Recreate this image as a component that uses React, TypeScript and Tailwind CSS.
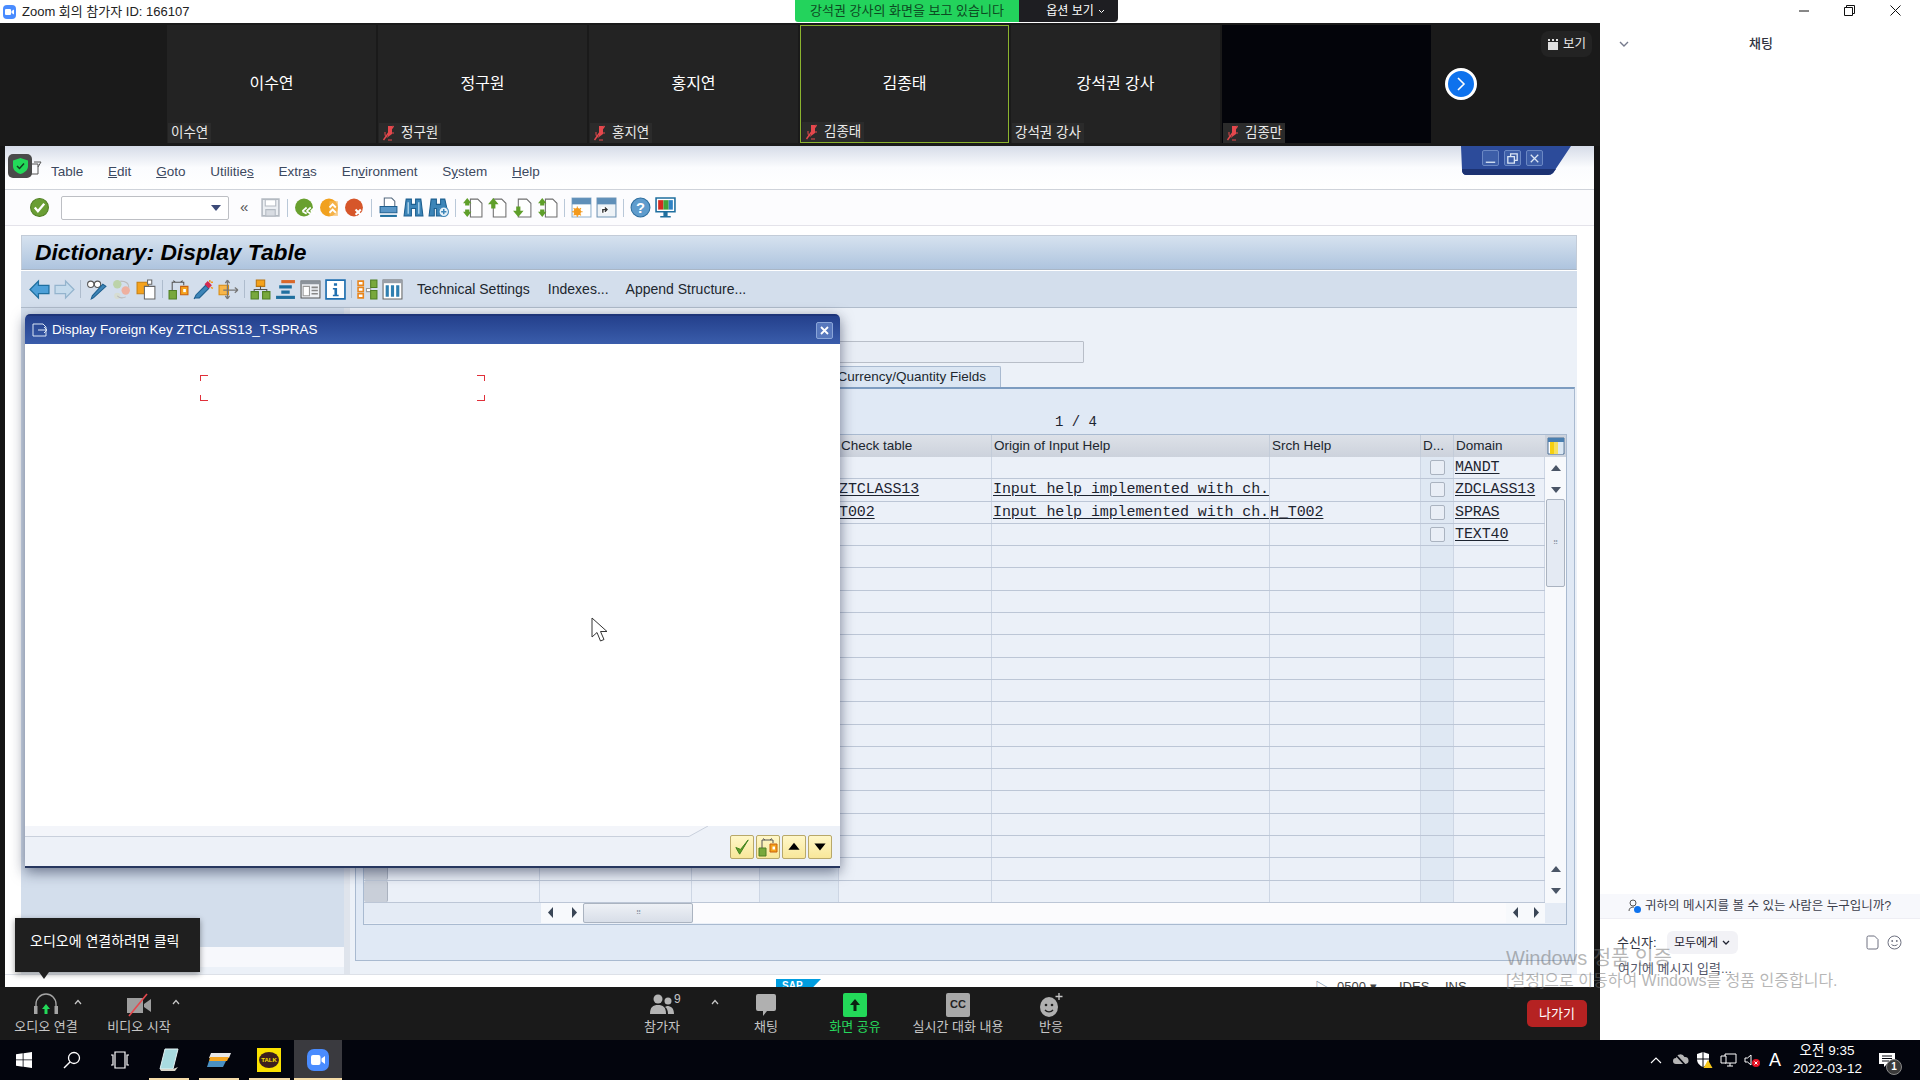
import React from 'react';

// ---- SAP GUI toolbar icons, all on a 20x20 box ----
const sapIcons: Record<string, React.ReactNode> = {
  ok: (
    <>
      <circle cx="10" cy="10" r="8.5" fill="#6a9e35" stroke="#4f7f22" />
      <path d="M5.5 10l3 3.5 6-7" fill="none" stroke="#fff" strokeWidth="2.2" />
    </>
  ),
  save: (
    <>
      <path d="M2 2h16v16H2z" fill="#eceff3" stroke="#b4bac2" strokeWidth="1.5" />
      <path d="M5 2.500h10v6H5z" fill="#fff" stroke="#b4bac2" />
      <path d="M5.500 12h9v6h-9z" fill="#d8dce2" stroke="#b4bac2" />
    </>
  ),
  back: (
    <>
      <circle cx="9.5" cy="10" r="8.5" fill="#69a02f" />
      <path d="M12 10l-4 3.5M12 16l-4-2.5M16 10l-4 3.5M16 16l-4-2.5M20 10l-4 3.5M20 16l-4-2.5" stroke="#fff" strokeWidth="1.6" fill="none" />
    </>
  ),
  exit: (
    <>
      <circle cx="9.5" cy="10" r="8.5" fill="#f1a11e" />
      <path d="M10 4h8v14h-8z" fill="#f7b95a" opacity="0.7" />
      <path d="M10 10l3-3 3 3M10 15l3-3 3 3" stroke="#fff" strokeWidth="1.7" fill="none" />
    </>
  ),
  cancel: (
    <>
      <circle cx="9.5" cy="10" r="8.5" fill="#d6562a" />
      <path d="M11 12l5 5M16 12l-5 5" stroke="#fff" strokeWidth="2" />
    </>
  ),
  print: (
    <>
      <path d="M6 1h7l3 3v5H6z" fill="#fff" stroke="#55697f" />
      <path d="M2 9h16v6H2z" fill="#5a97c7" stroke="#1f5f8f" />
      <path d="M2 17h16v2H2z" fill="#1f6f9f" />
    </>
  ),
  find: (
    <>
      <path d="M3 2h5v5h4V2h5l2 16h-7V11H8v7H1z" fill="#3d85b8" stroke="#1d5f8f" />
      <path d="M5 5v11M15 5v11" stroke="#a8d0ea" strokeWidth="1.4" />
    </>
  ),
  findNext: (
    <>
      <path d="M3 2h5v5h4V2h4l2 9-5 1v6H8v-7H6v7H1z" fill="#3d85b8" stroke="#1d5f8f" />
      <circle cx="15" cy="14" r="4.5" fill="#e8f2f9" stroke="#3d85b8" />
      <path d="M15 11.500v5M12.500 14h5" stroke="#3d85b8" strokeWidth="1.4" />
    </>
  ),
  pageFirst: (
    <>
      <path d="M8 2h7l4 4v13H8z" fill="#fff" stroke="#6f6f6f" />
      <path d="M1 6l4-5 4 5H7v2H3V6zM1 14l4 5 4-5H7v-2H3v2z" fill="#5f9f2a" />
    </>
  ),
  pagePrev: (
    <>
      <path d="M6 2h8l4 4v13H6z" fill="#fff" stroke="#6f6f6f" />
      <path d="M1 7l5-6 5 6H8v4H4V7z" fill="#5f9f2a" />
    </>
  ),
  pageNext: (
    <>
      <path d="M6 2h8l4 4v13H6z" fill="#fff" stroke="#6f6f6f" />
      <path d="M1 13l5 6 5-6H8V9H4v4z" fill="#5f9f2a" />
    </>
  ),
  winNew: (
    <>
      <path d="M1 1h18v18H1z" fill="#fff" stroke="#8fb0cc" />
      <path d="M1 1h18v6H1z" fill="#5f8fb8" />
      <circle cx="6" cy="14" r="3.5" fill="#f39a1d" />
      <path d="M6 9v10M1 14h10M2.500 10.500l7 7M9.500 10.500l-7 7" stroke="#f39a1d" />
    </>
  ),
  winLink: (
    <>
      <path d="M1 1h18v18H1z" fill="#eef3f7" stroke="#6f93b3" />
      <path d="M1 1h18v6H1z" fill="#5f8fb8" />
      <path d="M5 9.500h6v6H5z" fill="#fff" />
      <path d="M6.500 15v-3h4M8.500 10l2 2-2 2" stroke="#333" fill="none" strokeWidth="1.3" />
    </>
  ),
  help: (
    <>
      <circle cx="10" cy="10" r="9" fill="#5f9ccd" stroke="#2f6f9f" />
      <text x="10" y="15" textAnchor="middle" fontSize="14" fontWeight="700" fill="#fff" fontFamily="Liberation Sans">?</text>
    </>
  ),
  monitor: (
    <>
      <path d="M1 1h18v13H1z" fill="#fff" stroke="#1f6f9f" strokeWidth="1.5" />
      <path d="M3 3h5v9H3z" fill="#d42a20" />
      <path d="M8 3h5v9H8z" fill="#41a33a" />
      <path d="M13 3h4v9h-4z" fill="#2f82c4" />
      <path d="M8 14h4v4h3v1.500H5V18h3z" fill="#1f6f9f" />
    </>
  ),
  arrowL: <path d="M1 10l8-8v4h10v8H9v4z" fill="#4da0d8" stroke="#1f6f9f" strokeWidth="1.2" />,
  arrowR: <path d="M19 10l-8-8v4H1v8h10v4z" fill="#c5dbec" stroke="#94b4cd" strokeWidth="1.2" />,
  glasses: (
    <>
      <circle cx="4.500" cy="5" r="3" fill="#fff" stroke="#555" />
      <circle cx="11" cy="5" r="3" fill="#fff" stroke="#555" />
      <path d="M7 18l-2 1 1-3 10-11 3 2z" fill="#3d85b8" stroke="#1d5f8f" />
    </>
  ),
  circles: (
    <>
      <circle cx="6" cy="5" r="4" fill="#bcd3a9" />
      <circle cx="14" cy="11" r="4" fill="#eeb0a0" />
      <circle cx="6" cy="16" r="3" fill="#d7ddd2" />
      <path d="M9 2c6 0 8 2 8 6M14 17c-3 1.500-6 1-8-1" stroke="#bbb" fill="none" />
    </>
  ),
  docOrange: (
    <>
      <path d="M1 3h11v11H1z" fill="#f5a21b" stroke="#c87f10" />
      <path d="M8 7h10v12H8z" fill="#fff" stroke="#666" />
      <path d="M11 1h4v4h-4z" fill="#fff" stroke="#666" />
    </>
  ),
  relate: (
    <>
      <path d="M1 11h7v8H1z" fill="#78a83c" stroke="#4f7f22" />
      <path d="M12 7h7v8h-7z" fill="#f5a21b" stroke="#c8600f" />
      <path d="M14.500 9.500h2.500v3h-2.500z" fill="#fff" />
      <path d="M4 11V3h11v3M7 3l-2-1.500M12 3l2-1.500" stroke="#555" fill="none" />
    </>
  ),
  wand: (
    <>
      <path d="M2 18l-1 1 2-4 9-9 3 3-9 9z" fill="#3d85b8" stroke="#1d5f8f" />
      <path d="M11 5l3-3 4 4-3 3z" fill="#d42a50" />
      <path d="M16 1v2M19 3h-2M19 9l-2-1" stroke="#f39a1d" strokeWidth="1.4" />
    </>
  ),
  moveOut: (
    <>
      <path d="M1 6h9v9H1z" fill="#f8b64a" stroke="#d88a10" />
      <path d="M9 1v18M9 1L7 4M9 1l2 3M9 19l-2-3M9 19l2-3M5 10.500h14M19 10.500L16 8M19 10.500L16 13" stroke="#777" fill="none" strokeWidth="1.2" />
    </>
  ),
  tree: (
    <>
      <path d="M6 1h8v6H6z" fill="#f5a21b" stroke="#b87510" />
      <path d="M10 7v3M4 12v-2h12v2" stroke="#555" fill="none" />
      <path d="M1 12h7v7H1zM12 12h7v7h-7z" fill="#78a83c" stroke="#4f7f22" />
    </>
  ),
  stack: (
    <>
      <path d="M6 1h13v3H6z" fill="#d9682a" />
      <path d="M4 6h12v3H4zM6 11h8v3H6z" fill="#1f6f9f" />
      <path d="M1 16h18v3H1z" fill="#1f6f9f" />
    </>
  ),
  list: (
    <>
      <path d="M1 2h18v16H1z" fill="#eef1f5" stroke="#555" />
      <path d="M1 2h18v3H1z" fill="#8c939b" />
      <path d="M3 7h6v9H3z" fill="#fff" stroke="#999" />
      <path d="M11 8h6M11 11h6M11 14h6" stroke="#888" strokeWidth="1.5" />
    </>
  ),
  info: (
    <>
      <path d="M1 1h18v18H1z" fill="#fff" stroke="#1f6fb0" strokeWidth="1.6" />
      <path d="M8.500 4h3v2.500h-3zM7.500 8.500h4V15H13v1.500H7.500V15H9v-5H7.500z" fill="#1f6fb0" />
    </>
  ),
  blocks: (
    <>
      <path d="M1 2h5v4H1zM1 8h5v4H1zM1 14h5v4H1z" fill="#fff" stroke="#e8851c" strokeWidth="1.5" />
      <path d="M9 9h4v3H9z" fill="#fff" stroke="#999" />
      <path d="M13 1h6v7h-6zM13 11h6v8h-6z" fill="#78a83c" stroke="#4f7f22" />
    </>
  ),
  columns: (
    <>
      <path d="M1 1h18v18H1z" fill="#fff" stroke="#666" />
      <path d="M1 1h18v3H1z" fill="#9aa0a8" />
      <path d="M3.500 6h3v11h-3zM8.500 6h3v11h-3zM13.500 6h3v11h-3z" fill="#2f7fb0" />
    </>
  ),
  dlgAccept: <path d="M3 10l4 7 9-15-8 10z" fill="#5f9f2a" stroke="#3d7f1a" />,
  dlgUp: <path d="M10 4l8 10H2z" fill="#000" />,
  dlgDown: <path d="M2 5h16l-8 10z" fill="#000" />,
};

const SapIcon = ({ name, size = 21 }: { name: string; size?: number }) => (
  <svg width={size} height={size} viewBox="0 0 20 20">
    {sapIcons[name]}
  </svg>
);

const ToolBtn = ({ name }: { name: string }) => (
  <div className="w-[25px] flex items-center justify-center">
    <SapIcon name={name} />
  </div>
);

const ToolSep = ({ className = 'mx-[4px] bg-[#b9c8d8]' }: { className?: string }) => <div className={`w-px h-[18px] ${className}`} />;

// ---- Zoom participant strip ----
const MicOff = () => (
  <svg width="13" height="16" viewBox="0 0 13 16" className="shrink-0">
    <path d="M6 1h4v8l-4 3z" fill="#e5484d" />
    <path d="M3 7v2c0 2 1 3 3 3M11 7v2M6 15h4" stroke="#e5484d" fill="none" />
    <path d="M11.500 1L1.500 15" stroke="#e5484d" strokeWidth="1.4" />
  </svg>
);

const Tile = ({ name, muted, active, dark }: { name: string; muted?: boolean; active?: boolean; dark?: boolean }) => (
  <div
    className={`relative w-[209px] h-[118px] flex items-center justify-center ${dark ? 'bg-[#03040a]' : 'bg-[#232323]'} ${
      active ? 'border border-[#8bb32e]' : ''
    }`}
  >
    {!dark && <span className="text-white text-[16px] -mt-[1px]">{name}</span>}
    <div className="absolute left-[1px] bottom-0 h-[20px] px-[3px] flex items-center gap-[6px] bg-[#2b2b2b] text-[#eaeaea] text-[13.5px]">
      {muted && <MicOff />}
      {name}
    </div>
  </div>
);

// ---- Zoom bottom bar ----
const Caret = ({ left }: { left: string }) => (
  <svg width="8" height="6" viewBox="0 0 8 6" className={`absolute top-[12px] ${left}`}>
    <path d="M1 5l3-3.500L7 5" stroke="#c8c8c8" strokeWidth="1.2" fill="none" />
  </svg>
);

const BarItem = ({ label, className, green, children }: { label: string; className: string; green?: boolean; children: React.ReactNode }) => (
  <div className={`relative flex flex-col items-center pt-[5px] ${className}`}>
    <div className="h-[25px] flex items-center justify-center">{children}</div>
    <span className={`text-[13px] whitespace-nowrap ${green ? 'text-[#26d75c]' : 'text-[#c6c6c6]'}`}>{label}</span>
  </div>
);

const ZoomBar = () => (
  <div className="h-[53px] shrink-0 bg-[#1a1a1a] flex">
    <BarItem label="오디오 연결" className="ml-[14px] w-[64px]">
      <svg width="26" height="24" viewBox="0 0 26 24">
        <path d="M3 17V11a10 10 0 0 1 20 0v6" stroke="#a4a4a4" strokeWidth="1.4" fill="none" />
        <path d="M1 13h3.500v8H1zM21.500 13H25v8h-3.500z" fill="#a4a4a4" />
        <path d="M13 11l4 5h-2.500v5h-3v-5H9z" fill="#23d959" />
      </svg>
      <Caret left="left-[60px]" />
    </BarItem>
    <BarItem label="비디오 시작" className="ml-[29px] w-[64px]">
      <svg width="26" height="24" viewBox="0 0 26 24">
        <path d="M1 5h16v15H1z" fill="#9e9e9e" />
        <path d="M18 11l7-5v13l-7-5z" fill="#9e9e9e" />
        <path d="M21 1L3 23" stroke="#e5484d" strokeWidth="1.6" />
      </svg>
      <Caret left="left-[65px]" />
    </BarItem>
    <BarItem label="참가자" className="ml-[466px] w-[50px]">
      <svg width="26" height="24" viewBox="0 0 26 24">
        <circle cx="9" cy="6" r="4.500" fill="#b4b4b4" />
        <circle cx="19" cy="8" r="3.500" fill="#b4b4b4" />
        <path d="M1 21c0-7 3-9 8-9s8 2 8 9z" fill="#b4b4b4" />
        <path d="M18 13c4 0 7 2 7 8h-6c0-3-1-6-3-7z" fill="#b4b4b4" />
      </svg>
      <span className="absolute left-[37px] top-[3px] text-[12px] text-[#c6c6c6]">9</span>
      <Caret left="left-[74px]" />
    </BarItem>
    <BarItem label="채팅" className="ml-[54px] w-[50px]">
      <svg width="22" height="24" viewBox="0 0 22 24">
        <path d="M3 1h16a2 2 0 0 1 2 2v13a2 2 0 0 1-2 2h-7l-4 5v-5H3a2 2 0 0 1-2-2V3a2 2 0 0 1 2-2z" fill="#b0b0b0" />
      </svg>
    </BarItem>
    <BarItem label="화면 공유" green className="ml-[29px] w-[70px]">
      <svg width="24" height="24" viewBox="0 0 24 24">
        <rect x="0" y="0" width="24" height="24" rx="2" fill="#23d959" />
        <path d="M12 6l5 6h-3.500v6h-3v-6H7z" fill="#0b2212" />
      </svg>
    </BarItem>
    <BarItem label="실시간 대화 내용" className="ml-[18px] w-[100px]">
      <div className="w-[24px] h-[24px] rounded-[2px] bg-[#a8a8a8] flex items-center justify-center text-[11px] font-bold text-[#222]">CC</div>
    </BarItem>
    <BarItem label="반응" className="ml-[18px] w-[50px]">
      <svg width="26" height="26" viewBox="0 0 26 26">
        <ellipse cx="11" cy="15" rx="9" ry="10" fill="#b0b0b0" />
        <circle cx="8" cy="13" r="1.300" fill="#222" />
        <circle cx="14" cy="13" r="1.300" fill="#222" />
        <path d="M7 18c2 2.500 6 2.500 8 0" stroke="#222" strokeWidth="1.3" fill="none" />
        <path d="M21 1v7M17.500 4.500h7" stroke="#c8c8c8" strokeWidth="1.3" />
      </svg>
    </BarItem>
    <button className="ml-[451px] mt-[13px] w-[60px] h-[27px] rounded-[5px] bg-[#b52222] text-white text-[13px]">나가기</button>
  </div>
);

// ---- Dictionary table ----
const colTemplate = 'grid grid-cols-[24px_152px_152px_68px_79px_153px_278px_151px_33px_91px]';
const dataRows: { check?: string; origin?: string; help?: string; domain?: string; box?: boolean }[] = [
  { domain: 'MANDT', box: true },
  { check: 'ZTCLASS13', origin: 'Input help implemented with ch.', domain: 'ZDCLASS13', box: true },
  { check: 'T002', origin: 'Input help implemented with ch.', help: 'H_T002', domain: 'SPRAS', box: true },
  { domain: 'TEXT40', box: true },
  ...Array.from({ length: 16 }, () => ({})),
];

const MonoCell = ({ text, className = '' }: { text?: string; className?: string }) => (
  <div className={`border-r border-[#cdd6e4] overflow-hidden font-['Liberation_Mono',monospace] text-[15px] tracking-[-0.1px] leading-[22px] text-[#1d2430] whitespace-nowrap ${className}`}>
    {text && <span className="underline underline-offset-[2px]">{text}</span>}
  </div>
);

const HeadCell = ({ text, className = '' }: { text?: string; className?: string }) => (
  <div className={`border-r border-[#c3ccd9] pl-[2px] flex items-center text-[13.5px] text-[#20262e] whitespace-nowrap overflow-hidden ${className}`}>{text}</div>
);

const ScrollBtn = ({ up }: { up?: boolean }) => (
  <div className="h-[22px] flex items-center justify-center bg-[#f7f9fc]">
    <svg width="10" height="7" viewBox="0 0 10 7">
      <path d={up ? 'M5 0l5 6H0z' : 'M0 0h10L5 6z'} fill="#4a5566" />
    </svg>
  </div>
);

const ArrowBox = ({ right }: { right?: boolean }) => (
  <div className="w-[18px] h-full flex items-center justify-center bg-[#f7f9fc]">
    <svg width="7" height="11" viewBox="0 0 7 11">
      <path d={right ? 'M1 0l5 5.500L1 11z' : 'M6 0L1 5.500 6 11z'} fill="#3a4656" />
    </svg>
  </div>
);

const FieldsTable = () => (
  <div className="h-[491px] border border-[#a9bad0] bg-[#ebf0f8] flex flex-col">
    <div className="flex">
      <div className="w-[1181px]">
        <div className={`${colTemplate} h-[22px] bg-gradient-to-b from-[#dde1e8] to-[#ccd2dc]`}>
          <HeadCell />
          <HeadCell />
          <HeadCell />
          <HeadCell />
          <HeadCell />
          <HeadCell text="Check table" />
          <HeadCell text="Origin of Input Help" />
          <HeadCell text="Srch Help" />
          <HeadCell text="D..." />
          <HeadCell text="Domain" className="border-r-0" />
        </div>
        {dataRows.map((r, i) => (
          <div key={i} className={`${colTemplate} h-[22.3px] border-b border-[#bcc6d6]`}>
            <div className="bg-[#c9cfd9] border-r border-[#aab2bf] rounded-[2px]" />
            <MonoCell />
            <MonoCell />
            <MonoCell />
            <MonoCell className="bg-[#dfe8f3]" />
            <MonoCell text={r.check} />
            <MonoCell text={r.origin} className="pl-[1px]" />
            <MonoCell text={r.help} />
            <div className="bg-[#dfe8f3] border-r border-[#cdd6e4] flex items-center justify-center">
              {r.box && <div className="w-[15px] h-[15px] rounded-[2px] border border-[#aab3c0] bg-[#e9eef6]" />}
            </div>
            <MonoCell text={r.domain} className="pl-[1px]" />
          </div>
        ))}
      </div>
      <div className="w-[21px] flex flex-col">
        <div className="h-[22px] flex items-center justify-center bg-[#ccd2dc]">
          <svg width="18" height="18" viewBox="0 0 18 18">
            <path d="M1 1h16v16H1z" fill="#fff" stroke="#4a6f95" />
            <path d="M1 1h16v4H1z" fill="#4a7fb0" />
            <path d="M3 5h4v12H3z" fill="#f5d010" />
            <path d="M7 5h4v12H7z" fill="#f5e060" />
            <path d="M11 5h5v12h-5z" fill="#dbe8f4" />
          </svg>
        </div>
        <ScrollBtn up />
        <ScrollBtn />
        <div className="flex-1 bg-[#f7f9fc] px-[1px]">
          <div className="h-[88px] mt-[-2px] border border-[#aab3c0] rounded-[2px] bg-[#e4eaf3] flex items-center justify-center text-[7px] text-[#8a94a3]">⠿</div>
        </div>
        <ScrollBtn up />
        <ScrollBtn />
      </div>
    </div>
    <div className="h-[20px] flex items-stretch">
      <div className="w-[177px] bg-[#e4ebf5]" />
      <ArrowBox />
      <div className="w-[6px] bg-[#f7f9fc]" />
      <ArrowBox right />
      <div className="w-[110px] border border-[#aab3c0] rounded-[2px] bg-gradient-to-b from-[#eef1f6] to-[#d8dee8] flex items-center justify-center text-[7px] text-[#8a94a3]">⠿</div>
      <div className="flex-1 bg-[#fbfbfd]" />
      <ArrowBox />
      <div className="w-[3px] bg-[#f7f9fc]" />
      <ArrowBox right />
      <div className="w-[21px] bg-[#e4ebf5]" />
    </div>
  </div>
);

// ---- SAP body under the application toolbar ----
const SapBody = () => (
  <div className="flex-1 flex bg-[#ecf1f8] min-h-0">
    <div className="w-[324px] flex flex-col">
      <div className="flex-1 bg-[#d3deec]" />
      <div className="h-[20px] bg-[#f7f8fc]" />
      <div className="h-[7px]" />
    </div>
    <div className="w-[6px] bg-[#dfe4ec]" />
    <div className="flex-1 flex flex-col pl-[5px] pr-[2px]">
      <div className="h-[55px] flex items-end justify-end pr-[491px]">
        <div className="w-[400px] h-[22px] border border-[#b8bec8] rounded-[1px] bg-[#e8edf5]" />
      </div>
      <div className="h-[24px] pt-[3px] flex justify-end pr-[574px]">
        <div className="h-[21px] pl-[2px] pr-[14px] flex items-center border border-b-0 border-[#a9bad0] rounded-t-[2px] bg-[#dbe6f3] text-[13.5px] text-[#20262e]">
          Currency/Quantity Fields
        </div>
      </div>
      <div className="h-[574px] border border-[#a9bad0] border-t-2 border-t-[#7d9cc0] bg-[#e0e9f5] pl-[7px] pr-[7px]">
        <div className="h-[45px] pl-[692px] pt-[24px] font-['Liberation_Mono',monospace] text-[14px] leading-[18px] text-[#1d2430] whitespace-pre">1 / 4</div>
        <FieldsTable />
      </div>
    </div>
  </div>
);

// ---- Popup over the SAP window ----
const ForeignKeyDialog = () => (
  <div className="absolute left-[20px] top-[168px] w-[815px] h-[554px] flex flex-col rounded-t-[5px] overflow-hidden border-b-2 border-[#27375f] shadow-[0_4px_14px_rgba(20,30,60,0.55)] bg-white">
    <div className="h-[30px] shrink-0 flex items-center pl-[7px] pr-[7px] bg-gradient-to-b from-[#24408c] to-[#3a5dab] border-t-2 border-[#1d3478]">
      <svg width="16" height="14" viewBox="0 0 16 14">
        <path d="M1 1h10l3 3v9H1z" fill="none" stroke="#dbe6f5" />
        <path d="M6 7h9M12 4l3 3-3 3" stroke="#dbe6f5" fill="none" />
      </svg>
      <span className="ml-[4px] text-white text-[13.5px]">Display Foreign Key ZTCLASS13_T-SPRAS</span>
      <div className="ml-auto w-[17px] h-[17px] rounded-[2px] bg-[#5878bd] border border-[#8aa5d8] flex items-center justify-center">
        <svg width="9" height="9" viewBox="0 0 9 9">
          <path d="M1 1l7 7M8 1L1 8" stroke="#fff" strokeWidth="1.8" />
        </svg>
      </div>
    </div>
    <div className="flex-1 relative">
      {/* red selection corners of the empty control */}
      <div className="absolute left-[175px] top-[31px] w-[8px] h-[6px] border-l border-t border-[#e0303a]" />
      <div className="absolute left-[175px] top-[51px] w-[8px] h-[6px] border-l border-b border-[#e0303a]" />
      <div className="absolute left-[452px] top-[31px] w-[8px] h-[6px] border-r border-t border-[#e0303a]" />
      <div className="absolute left-[452px] top-[51px] w-[8px] h-[6px] border-r border-b border-[#e0303a]" />
      <svg width="18" height="26" viewBox="0 0 18 26" className="absolute left-[566px] top-[273px]">
        <path d="M1 1v19l5-4.500 3.500 8.500 3.500-1.500L9.500 14.500H16z" fill="#fff" stroke="#333" />
      </svg>
    </div>
    <div className="relative h-[40px] shrink-0 bg-[#edf1f8] flex justify-end items-start pr-[8px] pt-[9px] gap-[2px]">
      <svg className="absolute left-0 top-0" width="815" height="12" viewBox="0 0 815 12">
        <path d="M0 0h683L664 10.500H0z" fill="#f3f5fa" />
        <path d="M683 0L664 10.500H0" stroke="#c9d0dc" fill="none" />
      </svg>
      {['dlgAccept', 'relate', 'dlgUp', 'dlgDown'].map((n) => (
        <div key={n} className="relative w-[24px] h-[24px] rounded-[2px] border border-[#b8a86a] bg-gradient-to-b from-[#fff7c8] to-[#f8e79a] flex items-center justify-center">
          <SapIcon name={n} size={n === 'relate' ? 20 : n === 'dlgAccept' ? 19 : 14} />
        </div>
      ))}
    </div>
  </div>
);

// ---- SAP window as seen inside the shared screen ----
const SapWindow = () => (
  <div className="relative w-[1589px] ml-[5px] flex-1 min-h-0 flex flex-col overflow-hidden bg-white">
    <div className="h-[44px] shrink-0 flex items-center gap-[24.800px] pl-[46px] pt-[10px] border-b border-[#cfd3da] bg-gradient-to-b from-[#d6dce8] via-[#fbfcfe] to-white text-[13.5px] text-[#3c4960]">
      <span>Table</span>
      <span><u>E</u>dit</span>
      <span><u>G</u>oto</span>
      <span>Utilitie<u>s</u></span>
      <span>Extr<u>a</u>s</span>
      <span>En<u>v</u>ironment</span>
      <span>S<u>y</u>stem</span>
      <span><u>H</u>elp</span>
    </div>

    <div className="h-[36px] shrink-0 flex items-center pl-[22px] border-b border-[#e4e3ea] bg-[#fcfcfe]">
      <ToolBtn name="ok" />
      <div className="ml-[9px] w-[168px] h-[24px] border border-[#bdbfc4] rounded-[2px] bg-white flex items-center justify-end pr-[7px]">
        <svg width="10" height="6" viewBox="0 0 10 6">
          <path d="M0 0h10L5 6z" fill="#3c4a78" />
        </svg>
      </div>
      <span className="ml-[11px] text-[15px] text-[#555]">«</span>
      <div className="ml-[10px] flex items-center">
        <ToolBtn name="save" />
        <ToolSep />
        <ToolBtn name="back" />
        <ToolBtn name="exit" />
        <ToolBtn name="cancel" />
        <ToolSep />
        <ToolBtn name="print" />
        <ToolBtn name="find" />
        <ToolBtn name="findNext" />
        <ToolSep />
        <ToolBtn name="pageFirst" />
        <ToolBtn name="pagePrev" />
        <ToolBtn name="pageNext" />
        <ToolBtn name="pageFirst" />
        <ToolSep />
        <ToolBtn name="winNew" />
        <ToolBtn name="winLink" />
        <ToolSep />
        <ToolBtn name="help" />
        <ToolBtn name="monitor" />
      </div>
    </div>

    <div className="flex-1 min-h-0 flex flex-col ml-[16px] mr-[17px] mt-[9px]">
      <div className="h-[35px] shrink-0 flex items-center pl-[13px] border border-[#c3ccd8] border-b-[#a9b6c6] bg-gradient-to-b from-[#d6e2ef] to-[#aec4de] text-[22.800px] font-bold italic text-black">
        Dictionary: Display Table
      </div>
      <div className="h-[37px] shrink-0 flex items-center pl-[6px] mt-[1px] border-b border-[#b0bccb] bg-[#d3deec] text-[14px] text-[#20262e]">
        <ToolBtn name="arrowL" />
        <ToolBtn name="arrowR" />
        <ToolSep className="mx-[3px] bg-[#aebccd]" />
        <ToolBtn name="glasses" />
        <ToolBtn name="circles" />
        <ToolBtn name="docOrange" />
        <ToolSep className="mx-[3px] bg-[#aebccd]" />
        <ToolBtn name="relate" />
        <ToolBtn name="wand" />
        <ToolBtn name="moveOut" />
        <ToolSep className="mx-[3px] bg-[#aebccd]" />
        <ToolBtn name="tree" />
        <ToolBtn name="stack" />
        <ToolBtn name="list" />
        <ToolBtn name="info" />
        <ToolSep className="mx-[3px] bg-[#aebccd]" />
        <ToolBtn name="blocks" />
        <ToolBtn name="columns" />
        <span className="ml-[12px]">Technical Settings</span>
        <span className="ml-[18px]">Indexes...</span>
        <span className="ml-[17px]">Append Structure...</span>
      </div>
      <SapBody />
      <div className="h-[13px] shrink-0" />
    </div>

    {/* cut-off status line behind the meeting bar */}
    <div className="absolute left-0 right-0 bottom-0 h-[13px] overflow-hidden border-t border-[#dde1e8] bg-white">
      <div className="absolute left-[771px] top-[4px] w-[45px] h-[14px] bg-[#009de0] [clip-path:polygon(0_0,100%_0,70%_100%,0_100%)] text-white text-[10px] font-bold pl-[6px] leading-[14px]">SAP</div>
      <div className="absolute left-[1310px] top-[5px] flex items-start text-[13px] leading-[14px] text-[#444]">
        <span className="w-[22px] text-[#7a8a9f]">▷</span>
        <span className="w-[62px]">0500 ▾</span>
        <span className="w-[46px]">IDES</span>
        <span>INS</span>
      </div>
    </div>

    {/* window buttons in the corner */}
    <svg width="112" height="32" viewBox="0 0 112 32" className="absolute left-[1456px] top-0">
      <path d="M0 0h110L92 27q-2 2-5 2H6q-5 0-5-5z" fill="#2c4b9a" />
      <path d="M1 24q0 5 5 5h81q3 0 5-2l3-4H1z" fill="#1c3272" />
    </svg>
    <div className="absolute left-[1477px] top-[4px] flex gap-[5px]">
      {['M3 12h10', 'M3 6h7v7H3zM6 6V3h7v7h-3', 'M4 4l8 8M12 4l-8 8'].map((d) => (
        <div key={d} className="w-[17px] h-[16px] rounded-[2px] border border-[#6b88c4] bg-[#3d5ea8] flex items-center justify-center">
          <svg width="15" height="15" viewBox="0 0 16 16">
            <path d={d} stroke="#dbe6f5" strokeWidth="1.4" fill="none" />
          </svg>
        </div>
      ))}
    </div>

    {/* SAP menu icon, half hidden by the meeting shield */}
    <svg width="14" height="14" viewBox="0 0 14 14" className="absolute left-[23px] top-[15px]">
      <path d="M1 3h9v10H1zM6 1h7l-3 5" stroke="#555" fill="none" />
    </svg>
    <div className="absolute left-[3px] top-[8px] w-[24px] h-[24px] rounded-[5px] bg-[#4a4a4a] flex items-center justify-center">
      <svg width="15" height="16" viewBox="0 0 15 16">
        <path d="M7.500 0L15 2.500V8c0 4-3 6.500-7.500 8C3 14.500 0 12 0 8V2.500z" fill="#23d959" />
        <path d="M4 8l2.500 2.500L11 5.500" stroke="#11401f" strokeWidth="1.5" fill="none" />
      </svg>
    </div>

    <ForeignKeyDialog />

    <div className="absolute left-[10px] top-[772px] w-[185px] h-[54px] bg-[#1f1f1f] shadow-[0_2px_6px_rgba(0,0,0,0.4)] flex items-center pl-[15px] pb-[8px] text-white text-[14px]">
      오디오에 연결하려면 클릭
      <div className="absolute left-[24px] top-[54px] w-0 h-0 border-x-[5px] border-x-transparent border-t-[7px] border-t-[#1f1f1f]" />
    </div>
  </div>
);

// ---- Right side chat panel ----
const ChatPanel = () => (
  <div className="w-[320px] shrink-0 bg-white flex flex-col">
    <div className="h-[41px] flex items-center pl-[19px]">
      <svg width="10" height="6" viewBox="0 0 10 6">
        <path d="M1 1l4 4 4-4" stroke="#767a8c" strokeWidth="1.4" fill="none" />
      </svg>
      <span className="ml-[120px] text-[13px] font-medium text-[#30333f]">채팅</span>
    </div>
    <div className="flex-1" />
    <div className="h-[25px] flex items-center pl-[28px] gap-[4px] border-b border-[#eeeef4] bg-[#f7f8fc] text-[12.500px] text-[#3c3f4d] whitespace-nowrap">
      <svg width="13" height="15" viewBox="0 0 13 15">
        <circle cx="5" cy="4" r="3" fill="none" stroke="#555" />
        <path d="M1 12c0-3 2-4 5-4" stroke="#555" fill="none" />
        <circle cx="9.500" cy="10.500" r="3.500" fill="#0e72ed" />
      </svg>
      귀하의 메시지를 볼 수 있는 사람은 누구입니까?
    </div>
    <div className="h-[121px] px-[17px] pt-[12px] text-[13px] text-[#30333f]">
      <div className="flex items-center h-[23px]">
        <span>수신자:</span>
        <div className="ml-[10px] h-[23px] w-[71px] rounded-[6px] bg-[#f2f2f6] flex items-center justify-center gap-[4px] text-[12px] text-[#1f2230]">
          모두에게
          <svg width="8" height="5" viewBox="0 0 8 5">
            <path d="M1 1l3 3 3-3" stroke="#1f2230" strokeWidth="1.3" fill="none" />
          </svg>
        </div>
        <svg width="13" height="15" viewBox="0 0 13 15" className="ml-auto">
          <path d="M2.500 1h6L12 4.500V12a2 2 0 0 1-2 2H2.500A1.500 1.500 0 0 1 1 12.500v-10A1.500 1.500 0 0 1 2.500 1z" fill="none" stroke="#6e7180" />
        </svg>
        <svg width="15" height="15" viewBox="0 0 15 15" className="ml-[8px] mr-[1px]">
          <circle cx="7.500" cy="7.500" r="6.500" fill="none" stroke="#6e7180" />
          <circle cx="5.200" cy="6" r="0.900" fill="#6e7180" />
          <circle cx="9.800" cy="6" r="0.900" fill="#6e7180" />
          <path d="M4.500 9.500c1.500 1.500 4.500 1.500 6 0" stroke="#6e7180" fill="none" />
        </svg>
      </div>
      <div className="mt-[5px] pl-[1px] text-[#55586a]">여기에 메시지 입력...</div>
    </div>
  </div>
);

// ---- Windows taskbar ----
const Taskbar = () => (
  <div className="h-[40px] shrink-0 bg-[#03050d] flex relative">
    <div className="w-[48px] flex items-center justify-center">
      <svg width="16" height="16" viewBox="0 0 16 16">
        <path d="M0 2.300L6.700 1.300V7.500H0zM7.500 1.200L16 0V7.500H7.500zM0 8.300H6.700V14.700L0 13.700zM7.500 8.300H16V16L7.500 14.800z" fill="#fff" />
      </svg>
    </div>
    <div className="w-[48px] flex items-center justify-center">
      <svg width="18" height="18" viewBox="0 0 18 18">
        <circle cx="11" cy="7" r="5.500" fill="none" stroke="#fff" strokeWidth="1.3" />
        <path d="M7 11l-6 6" stroke="#fff" strokeWidth="1.5" />
      </svg>
    </div>
    <div className="w-[48px] flex items-center justify-center">
      <svg width="20" height="18" viewBox="0 0 20 18">
        <path d="M5 1h10v16H5z" fill="none" stroke="#fff" strokeWidth="1.2" />
        <path d="M1 4h2v10H1M19 4h-2v10h2" fill="none" stroke="#fff" strokeWidth="1.2" />
      </svg>
    </div>
    <div className="relative w-[50px] flex items-center justify-center">
      <svg width="22" height="24" viewBox="0 0 22 24">
        <path d="M7 1h13l-5 20H2z" fill="#a8dbe0" stroke="#e5f4f5" />
        <path d="M2 21h13l5-2-3 4H3z" fill="#d8d4c8" />
      </svg>
      <div className="absolute bottom-0 left-[5px] w-[40px] h-[2px] bg-[#f5dca8]" />
    </div>
    <div className="relative w-[50px] flex items-center justify-center">
      <svg width="24" height="16" viewBox="0 0 24 16">
        <path d="M4 1h20l-2 5H2z" fill="#e8e8e8" />
        <path d="M3 5h19l-2 4H2z" fill="#f5a623" />
        <path d="M2 9h17l-3 6H0z" fill="#4a90c2" />
      </svg>
      <div className="absolute bottom-0 left-[5px] w-[40px] h-[2px] bg-[#f5dca8]" />
    </div>
    <div className="relative w-[50px] flex items-center justify-center">
      <div className="w-[24px] h-[24px] bg-[#fae100] flex items-center justify-center">
        <div className="w-[20px] h-[16px] rounded-[50%] bg-[#3c1e1e] text-[#fae100] text-[6px] font-bold flex items-center justify-center">TALK</div>
      </div>
      <div className="absolute bottom-0 left-[5px] w-[41px] h-[2px] bg-[#f5dca8]" />
    </div>
    <div className="relative w-[48px] bg-[#3a3a3f] flex items-center justify-center">
      <div className="w-[22px] h-[22px] rounded-[7px] bg-[#4a8cff] flex items-center justify-center">
        <svg width="14" height="10" viewBox="0 0 14 10">
          <rect x="0" y="0" width="9.500" height="10" rx="2" fill="#fff" />
          <path d="M10.500 3.500L14 1v8l-3.500-2.500z" fill="#fff" />
        </svg>
      </div>
      <div className="absolute bottom-0 left-0 right-0 h-[2px] bg-[#f5dca8]" />
    </div>

    <div className="ml-auto flex items-center text-white">
      <svg width="12" height="7" viewBox="0 0 12 7" className="mr-[10px]">
        <path d="M1 6l5-5 5 5" stroke="#fff" strokeWidth="1.1" fill="none" />
      </svg>
      <svg width="17" height="14" viewBox="0 0 17 14" className="mr-[7px]">
        <path d="M4 11a3 3 0 0 1 0-6 4.500 4.500 0 0 1 8.500-1 3.500 3.500 0 0 1 1 7z" fill="#b5b5b5" />
        <path d="M3 1l11 12" stroke="#03050d" strokeWidth="1.8" />
      </svg>
      <svg width="17" height="18" viewBox="0 0 17 18" className="mr-[7px]">
        <path d="M7 1L1 3v5c0 4 2.500 6.500 6 8 3.500-1.500 6-4 6-8V3z" fill="#fff" />
        <path d="M7 1v15M1 8h12" stroke="#03050d" />
        <path d="M12 9l4.500 8h-9z" fill="#f5c518" />
      </svg>
      <svg width="17" height="16" viewBox="0 0 17 16" className="mr-[7px]">
        <path d="M5 2h11v9H5zM10 11v3M7 14h6" stroke="#fff" fill="none" />
        <path d="M1 4h5v7H1z" fill="#03050d" stroke="#fff" />
      </svg>
      <svg width="17" height="15" viewBox="0 0 17 15" className="mr-[8px]">
        <path d="M1 5h2.500L7 2v10L3.500 9H1z" fill="none" stroke="#fff" />
        <circle cx="12" cy="10" r="4" fill="#e81123" />
        <path d="M10.500 8.500l3 3M13.500 8.500l-3 3" stroke="#fff" />
      </svg>
      <span className="text-[18px] leading-none mr-[12px]">A</span>
      <div className="w-[68px] text-center text-[13.500px] leading-[18px] whitespace-nowrap mr-[18px]">
        <div>오전 9:35</div>
        <div>2022-03-12</div>
      </div>
      <div className="relative w-[16px] h-[15px] mr-[25px]">
        <svg width="16" height="15" viewBox="0 0 16 15">
          <path d="M0 0h16v11H8l-3 3v-3H0z" fill="#fff" />
          <path d="M3 3h10M3 5.500h10M3 8h7" stroke="#03050d" />
        </svg>
        <div className="absolute left-[7px] top-[6px] w-[16px] h-[16px] rounded-full bg-[#3a3a3a] border border-[#888] text-[10px] font-bold leading-[14px] text-center">1</div>
      </div>
    </div>
  </div>
);

const App: React.FC = () => {
  return (
    <div className="relative w-[1920px] h-[1080px] overflow-hidden flex flex-col bg-[#1a1a1a] font-['Liberation_Sans','Noto_Sans_CJK_KR',sans-serif]">
      {/* window title */}
      <div className="h-[23px] shrink-0 bg-white flex items-start">
        <div className="w-[795px] h-full flex items-center pl-[3px]">
          <div className="w-[13px] h-[14px] rounded-[4px] bg-[#4a8cff] flex items-center justify-center">
            <svg width="9" height="6" viewBox="0 0 9 6">
              <rect x="0" y="0" width="6" height="6" rx="1" fill="#fff" />
              <path d="M6.500 2L9 .5v5L6.500 4z" fill="#fff" />
            </svg>
          </div>
          <span className="ml-[6px] text-[13px] text-[#222]">Zoom 회의 참가자 ID: 166107</span>
        </div>
        <div className="w-[224px] h-[22px] rounded-bl-[3px] bg-[#23d35c] flex items-center justify-center text-[13px] text-[#0d4a22]">
          강석권 강사의 화면을 보고 있습니다
        </div>
        <div className="w-[99px] h-[22px] rounded-br-[4px] bg-[#1e1e22] flex items-center justify-center gap-[4px] pl-[14px] text-[12px] text-white">
          옵션 보기
          <svg width="7" height="5" viewBox="0 0 7 5">
            <path d="M1 1l2.500 2.500L6 1" stroke="#fff" fill="none" />
          </svg>
        </div>
        <div className="flex-1" />
        <div className="flex h-[21px] items-center pr-[19.500px] gap-[35px]">
          <svg width="10" height="10" viewBox="0 0 10 10">
            <path d="M0 5h10" stroke="#111" />
          </svg>
          <svg width="11" height="11" viewBox="0 0 11 11">
            <path d="M.5 2.500h8v8h-8zM2.500 2.500v-2h8v8h-2" stroke="#111" fill="none" />
          </svg>
          <svg width="11" height="11" viewBox="0 0 11 11">
            <path d="M.5.500l10 10M10.500.500l-10 10" stroke="#111" />
          </svg>
        </div>
      </div>

      <div className="flex-1 min-h-0 flex">
        <div className="w-[1600px] shrink-0 flex flex-col bg-[#151515]">
          {/* participant strip */}
          <div className="relative h-[123px] shrink-0 flex gap-[2px] pl-[167px] pt-[2px] bg-[#1a1a1a]">
            <Tile name="이수연" />
            <Tile name="정구원" muted />
            <Tile name="홍지연" muted />
            <Tile name="김종태" muted active />
            <Tile name="강석권 강사" />
            <Tile name="김종만" muted dark />
            <div className="ml-[12px] mt-[43px] w-[32px] h-[32px] rounded-full border-[3px] border-white bg-[#0e72ed] flex items-center justify-center">
              <svg width="10" height="16" viewBox="0 0 10 16">
                <path d="M2 2l6 6-6 6" stroke="#fff" strokeWidth="1.6" fill="none" />
              </svg>
            </div>
            <div className="ml-[62px] mt-[6px] w-[51px] h-[26px] rounded-[8px] bg-[#232323] flex items-center justify-center gap-[4px] text-[12.500px] text-[#e8e8e8]">
              <svg width="12" height="11" viewBox="0 0 12 11">
                <path d="M1 3h10v8H1z" fill="#e0e0e0" />
                <path d="M1 0h2v2H1zM5 0h2v2H5zM9 0h2v2H9z" fill="#e0e0e0" />
              </svg>
              보기
            </div>
          </div>
          <SapWindow />
          <ZoomBar />
        </div>
        <ChatPanel />
      </div>

      <Taskbar />

      {/* activation watermark lying over everything */}
      <div className="absolute left-[1506px] top-[946px] pointer-events-none text-[rgba(110,110,110,0.5)] whitespace-nowrap">
        <div className="text-[20px] leading-[24px]">Windows 정품 인증</div>
        <div className="text-[16px] leading-[22px]">[설정]으로 이동하여 Windows를 정품 인증합니다.</div>
      </div>
    </div>
  );
};

export default App;
